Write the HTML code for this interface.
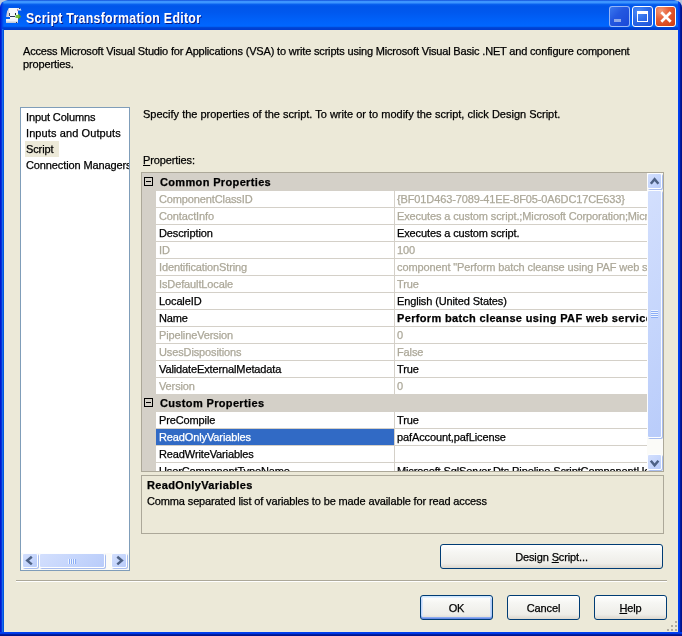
<!DOCTYPE html><html><head><meta charset="utf-8"><style>
*{box-sizing:border-box}
html,body{margin:0;padding:0}
body{-webkit-text-stroke:0.25px currentColor;letter-spacing:-0.12px;width:682px;height:636px;overflow:hidden;position:relative;background:#B9C6DE;font-family:"Liberation Sans",sans-serif;font-size:11px;color:#000}
#win{will-change:transform;position:absolute;left:0;top:0;width:682px;height:636px;background:#ECE9D8;border-radius:8px 8px 0 0;overflow:hidden}
.a{position:absolute}
.t{position:absolute;white-space:nowrap;line-height:13px}
.g{color:#ACA899}
.b{font-weight:bold;letter-spacing:0.35px}
.sb{position:absolute;border:1px solid #FDFEFF;border-radius:2px;background:linear-gradient(135deg,#D3DFFD 0%,#C6D6FC 50%,#B9CCFA 100%);box-shadow:1px 1px 0 #A9BDEF}
.btn{position:absolute;border:1px solid #003C74;border-radius:3px;background:linear-gradient(180deg,#FFFFFF 0%,#F6F6F3 30%,#EEEDE8 80%,#DCD7CE 100%);text-align:center}
.btn span{position:absolute;left:0;right:0;white-space:nowrap}
</style></head><body><div id="win">
<div class="a" style="left:0;top:0;width:682px;height:30px;border-radius:7px 7px 0 0;background:linear-gradient(180deg,#0033CC 0px,#3D95FF 1px,#3D95FF 3px,#0A63F0 4px,#0055EA 6px,#0058EE 12px,#0062FA 21px,#0066FF 25.5px,#0060F6 26.5px,#0048D8 27.5px,#003DD0 29px,#003DD0 30px)"></div>
<svg class="a" style="left:4px;top:6px" width="20" height="20" viewBox="0 0 20 20">
<path d="M5 2 H14 V13 H6 V11 H2.5 L3 6 Z" fill="#F6F7FB"/>
<path d="M2.5 11 L3 6 L5 2 L5 11 Z" fill="#D8D4DC"/>
<rect x="5" y="7" width="1" height="3" fill="#4A5068"/>
<rect x="6" y="10" width="5" height="1" fill="#2C3450"/>
<rect x="11" y="7" width="1" height="2" fill="#202838"/>
<path d="M13 2 H16 L17.5 4.5 H13 Z" fill="#E4ECF4"/>
<rect x="15" y="2" width="1" height="1" fill="#404860"/>
<rect x="13" y="3.5" width="1" height="1" fill="#C02850"/>
<path d="M11.5 9 H14 V7.5 L17 10.5 L14 13.5 V12 H11.5 Z" fill="#7CC23C"/>
<path d="M14 7.5 L17 10.5 L14 13.5 V12 L15.5 10.5 Z" fill="#4C9A28"/>
<rect x="2" y="13" width="12" height="4" fill="#EEF2F8"/>
<rect x="2" y="15.5" width="12" height="1.5" fill="#C4CCDC"/>
<rect x="12" y="16" width="1" height="1" fill="#303850"/>
</svg>
<div class="a" style="left:26px;top:10.5px;font-weight:bold;font-size:14px;color:#fff;text-shadow:1px 1px 0 #0A1883;-webkit-text-stroke:0;letter-spacing:0.3px;white-space:nowrap;line-height:14px;transform:scaleX(0.884);transform-origin:0 0">Script Transformation Editor</div>
<div class="a" style="left:609px;top:6px;width:21px;height:21px;border-radius:3px;border:1px solid rgba(190,215,255,0.75);background:linear-gradient(135deg,#3A78EE 0%,#2458E0 40%,#1A48D8 100%)"><div class="a" style="left:4px;top:12px;width:7px;height:3px;background:#8FA8E8"></div></div>
<div class="a" style="left:632px;top:6px;width:21px;height:21px;border-radius:3px;border:1px solid #fff;background:radial-gradient(circle at 30% 25%,#4A8CF8 0%,#2E6BE8 45%,#1C50D8 100%)"><div class="a" style="left:4px;top:4px;width:11px;height:11px;border:1px solid #fff;border-top-width:3px"></div></div>
<div class="a" style="left:655px;top:6px;width:21px;height:21px;border-radius:3px;border:1px solid #fff;background:radial-gradient(circle at 25% 20%,#F39A78 0%,#E65E36 40%,#D9481C 75%,#C93A10 100%)"><svg class="a" style="left:4px;top:4px" width="12" height="12" viewBox="0 0 12 12"><path d="M1.3 1.3 L10.7 10.7 M10.7 1.3 L1.3 10.7" stroke="#fff" stroke-width="2.7"/></svg></div>
<div class="a" style="left:0;top:29px;width:4px;height:607px;background:linear-gradient(90deg,#0019CF 0,#0019CF 1px,#0831D9 1px,#0831D9 2px,#166AEE 2px,#166AEE 3px,#0055DD 3px)"></div>
<div class="a" style="left:0;top:0;width:4px;height:29px;border-radius:7px 0 0 0;background:linear-gradient(90deg,#0019CF 0,#0028D8 1px,#0040E8 2px,rgba(0,80,238,0) 4px)"></div>
<div class="a" style="left:678px;top:0;width:4px;height:636px;background:linear-gradient(90deg,#0040F0 0,#0040F0 1px,#0038E6 1px,#0038E6 2px,#001EA0 2px,#001EA0 3px,#00138C 3px)"></div>
<div class="a" style="left:0;top:632px;width:682px;height:4px;background:linear-gradient(180deg,#0040F0 0,#0040F0 1px,#0038E6 1px,#0038E6 2px,#001EA0 2px,#001EA0 3px,#00138C 3px)"></div>
<div class="t" style="left:23px;top:45px;letter-spacing:-0.172px">Access Microsoft Visual Studio for Applications (VSA) to write scripts using Microsoft Visual Basic .NET and configure component</div>
<div class="t" style="left:23px;top:58px">properties.</div>
<div class="a" style="left:20px;top:107px;width:110px;height:464px;border:1px solid #7F9DB9;background:#fff;overflow:hidden">
<div class="a" style="left:4px;top:33px;width:34px;height:16px;background:#ECE9D8"></div>
<div class="a" style="left:5px;top:1px;height:16px;line-height:16px;white-space:nowrap;">Input Columns</div>
<div class="a" style="left:5px;top:17px;height:16px;line-height:16px;white-space:nowrap;letter-spacing:0.1px">Inputs and Outputs</div>
<div class="a" style="left:5px;top:33px;height:16px;line-height:16px;white-space:nowrap;">Script</div>
<div class="a" style="left:5px;top:49px;height:16px;line-height:16px;white-space:nowrap;">Connection Managers</div>
</div>
<div class="a" style="left:21px;top:553px;width:108px;height:17px;background:#FBFBF8"></div>
<div class="sb" style="left:22px;top:553px;width:16px;height:15px"></div>
<div class="sb" style="left:39px;top:553px;width:66px;height:15px"></div>
<div class="sb" style="left:111px;top:553px;width:16px;height:15px"></div>
<div class="t" style="left:143px;top:108px;letter-spacing:0">Specify the properties of the script. To write or to modify the script, click Design Script.</div>
<div class="t" style="left:143px;top:154px"><u>P</u>roperties:</div>
<div class="a" style="left:141px;top:172px;width:523px;height:300px;border:1px solid #ACA899;background:#D4D0C8;overflow:hidden"></div>
<div class="a" style="left:142px;top:173px;width:521px;height:298px;overflow:hidden">
<div class="a" style="left:2px;top:4px;width:9px;height:9px;border:1px solid #000"><div class="a" style="left:1px;top:3px;width:5px;height:1px;background:#000"></div></div>
<div class="a b" style="left:18px;top:1px;line-height:16px;white-space:nowrap">Common Properties</div>
<div class="a" style="left:14px;top:18px;width:238px;height:16px;background:#fff"></div>
<div class="a g" style="left:17px;top:18px;line-height:16px;white-space:nowrap;">ComponentClassID</div>
<div class="a g" style="left:253px;top:18px;width:252px;height:16px;background:#fff;overflow:hidden;line-height:16px;white-space:nowrap;padding-left:2px">{BF01D463-7089-41EE-8F05-0A6DC17CE633}</div>
<div class="a" style="left:14px;top:35px;width:238px;height:16px;background:#fff"></div>
<div class="a g" style="left:17px;top:35px;line-height:16px;white-space:nowrap;">ContactInfo</div>
<div class="a g" style="left:253px;top:35px;width:252px;height:16px;background:#fff;overflow:hidden;line-height:16px;white-space:nowrap;padding-left:2px">Executes a custom script.;Microsoft Corporation;Microsoft SqlServer v9; (C) 2005 Microsoft Corporation</div>
<div class="a" style="left:14px;top:52px;width:238px;height:16px;background:#fff"></div>
<div class="a " style="left:17px;top:52px;line-height:16px;white-space:nowrap;">Description</div>
<div class="a " style="left:253px;top:52px;width:252px;height:16px;background:#fff;overflow:hidden;line-height:16px;white-space:nowrap;padding-left:2px">Executes a custom script.</div>
<div class="a" style="left:14px;top:69px;width:238px;height:16px;background:#fff"></div>
<div class="a g" style="left:17px;top:69px;line-height:16px;white-space:nowrap;">ID</div>
<div class="a g" style="left:253px;top:69px;width:252px;height:16px;background:#fff;overflow:hidden;line-height:16px;white-space:nowrap;padding-left:2px">100</div>
<div class="a" style="left:14px;top:86px;width:238px;height:16px;background:#fff"></div>
<div class="a g" style="left:17px;top:86px;line-height:16px;white-space:nowrap;">IdentificationString</div>
<div class="a g" style="left:253px;top:86px;width:252px;height:16px;background:#fff;overflow:hidden;line-height:16px;white-space:nowrap;padding-left:2px">component &quot;Perform batch cleanse using PAF web service&quot;</div>
<div class="a" style="left:14px;top:103px;width:238px;height:16px;background:#fff"></div>
<div class="a g" style="left:17px;top:103px;line-height:16px;white-space:nowrap;">IsDefaultLocale</div>
<div class="a g" style="left:253px;top:103px;width:252px;height:16px;background:#fff;overflow:hidden;line-height:16px;white-space:nowrap;padding-left:2px">True</div>
<div class="a" style="left:14px;top:120px;width:238px;height:16px;background:#fff"></div>
<div class="a " style="left:17px;top:120px;line-height:16px;white-space:nowrap;">LocaleID</div>
<div class="a " style="left:253px;top:120px;width:252px;height:16px;background:#fff;overflow:hidden;line-height:16px;white-space:nowrap;padding-left:2px">English (United States)</div>
<div class="a" style="left:14px;top:137px;width:238px;height:16px;background:#fff"></div>
<div class="a " style="left:17px;top:137px;line-height:16px;white-space:nowrap;">Name</div>
<div class="a b" style="left:253px;top:137px;width:252px;height:16px;background:#fff;overflow:hidden;line-height:16px;white-space:nowrap;padding-left:2px">Perform batch cleanse using PAF web service</div>
<div class="a" style="left:14px;top:154px;width:238px;height:16px;background:#fff"></div>
<div class="a g" style="left:17px;top:154px;line-height:16px;white-space:nowrap;">PipelineVersion</div>
<div class="a g" style="left:253px;top:154px;width:252px;height:16px;background:#fff;overflow:hidden;line-height:16px;white-space:nowrap;padding-left:2px">0</div>
<div class="a" style="left:14px;top:171px;width:238px;height:16px;background:#fff"></div>
<div class="a g" style="left:17px;top:171px;line-height:16px;white-space:nowrap;">UsesDispositions</div>
<div class="a g" style="left:253px;top:171px;width:252px;height:16px;background:#fff;overflow:hidden;line-height:16px;white-space:nowrap;padding-left:2px">False</div>
<div class="a" style="left:14px;top:188px;width:238px;height:16px;background:#fff"></div>
<div class="a " style="left:17px;top:188px;line-height:16px;white-space:nowrap;">ValidateExternalMetadata</div>
<div class="a " style="left:253px;top:188px;width:252px;height:16px;background:#fff;overflow:hidden;line-height:16px;white-space:nowrap;padding-left:2px">True</div>
<div class="a" style="left:14px;top:205px;width:238px;height:16px;background:#fff"></div>
<div class="a g" style="left:17px;top:205px;line-height:16px;white-space:nowrap;">Version</div>
<div class="a g" style="left:253px;top:205px;width:252px;height:16px;background:#fff;overflow:hidden;line-height:16px;white-space:nowrap;padding-left:2px">0</div>
<div class="a" style="left:2px;top:225px;width:9px;height:9px;border:1px solid #000"><div class="a" style="left:1px;top:3px;width:5px;height:1px;background:#000"></div></div>
<div class="a b" style="left:18px;top:222px;line-height:16px;white-space:nowrap">Custom Properties</div>
<div class="a" style="left:14px;top:239px;width:238px;height:16px;background:#fff"></div>
<div class="a " style="left:17px;top:239px;line-height:16px;white-space:nowrap;">PreCompile</div>
<div class="a " style="left:253px;top:239px;width:252px;height:16px;background:#fff;overflow:hidden;line-height:16px;white-space:nowrap;padding-left:2px">True</div>
<div class="a" style="left:14px;top:256px;width:238px;height:16px;background:#316AC5"></div>
<div class="a " style="left:17px;top:256px;line-height:16px;white-space:nowrap;color:#fff;">ReadOnlyVariables</div>
<div class="a " style="left:253px;top:256px;width:252px;height:16px;background:#fff;overflow:hidden;line-height:16px;white-space:nowrap;padding-left:2px">pafAccount,pafLicense</div>
<div class="a" style="left:14px;top:273px;width:238px;height:16px;background:#fff"></div>
<div class="a " style="left:17px;top:273px;line-height:16px;white-space:nowrap;">ReadWriteVariables</div>
<div class="a " style="left:253px;top:273px;width:252px;height:16px;background:#fff;overflow:hidden;line-height:16px;white-space:nowrap;padding-left:2px"></div>
<div class="a" style="left:14px;top:290px;width:238px;height:16px;background:#fff"></div>
<div class="a " style="left:17px;top:290px;line-height:16px;white-space:nowrap;">UserComponentTypeName</div>
<div class="a " style="left:253px;top:290px;width:252px;height:16px;background:#fff;overflow:hidden;line-height:16px;white-space:nowrap;padding-left:2px">Microsoft.SqlServer.Dts.Pipeline.ScriptComponentHost</div>
<div class="a" style="left:505px;top:0;width:16px;height:298px;background:#FBFBF8"></div>
<div class="sb" style="left:505px;top:0;width:15px;height:16px"></div>
<div class="sb" style="left:505px;top:17px;width:15px;height:248px"></div>
<div class="sb" style="left:505px;top:281px;width:15px;height:16px"></div>
</div>
<svg class="a" style="left:0;top:0" width="682" height="636" viewBox="0 0 682 636"><polyline points="31.8,556.8 27.3,560.5999999999999 31.8,564.4" fill="none" stroke="#4D6185" stroke-width="2.5"/><polyline points="117.3,556.8 121.8,560.5999999999999 117.3,564.4" fill="none" stroke="#4D6185" stroke-width="2.5"/><rect x="68" y="559" width="1" height="5" fill="#EEF4FE"/><rect x="69" y="559" width="1" height="5" fill="#8CAEF6"/><rect x="70" y="559" width="1" height="5" fill="#EEF4FE"/><rect x="71" y="559" width="1" height="5" fill="#8CAEF6"/><rect x="72" y="559" width="1" height="5" fill="#EEF4FE"/><rect x="73" y="559" width="1" height="5" fill="#8CAEF6"/><rect x="74" y="559" width="1" height="5" fill="#EEF4FE"/><rect x="75" y="559" width="1" height="5" fill="#8CAEF6"/></svg>
<svg class="a" style="left:0;top:0" width="682" height="636" viewBox="0 0 682 636"><polyline points="650.8,183.8 654.5999999999999,179.3 658.4,183.8" fill="none" stroke="#4D6185" stroke-width="2.5"/><polyline points="650.8,460.8 654.5999999999999,465.3 658.4,460.8" fill="none" stroke="#4D6185" stroke-width="2.5"/><rect x="651" y="310" width="7" height="1" fill="#EEF4FE"/><rect x="651" y="311" width="7" height="1" fill="#8CAEF6"/><rect x="651" y="312" width="7" height="1" fill="#EEF4FE"/><rect x="651" y="313" width="7" height="1" fill="#8CAEF6"/><rect x="651" y="314" width="7" height="1" fill="#EEF4FE"/><rect x="651" y="315" width="7" height="1" fill="#8CAEF6"/><rect x="651" y="316" width="7" height="1" fill="#EEF4FE"/><rect x="651" y="317" width="7" height="1" fill="#8CAEF6"/></svg>
<div class="a" style="left:141px;top:475px;width:523px;height:59px;border:1px solid #ACA899"></div>
<div class="t b" style="left:147px;top:479px">ReadOnlyVariables</div>
<div class="t" style="left:147px;top:495px;letter-spacing:-0.133px">Comma separated list of variables to be made available for read access</div>
<div class="btn" style="left:440px;top:544px;width:223px;height:25px"><span style="top:6px">Design <u>S</u>cript...</span></div>
<div class="a" style="left:16px;top:580px;width:651px;height:1px;background:#ACA899"></div>
<div class="a" style="left:16px;top:581px;width:651px;height:1px;background:#fff"></div>
<div class="btn" style="left:420px;top:595px;width:73px;height:25px;box-shadow:inset 0 -1px 0 #6A8CE4,inset 0 -2px 0 #8AAAF0,inset 0 1px 0 #CEE7FF,inset 0 2px 0 #E4F0FF,inset 1px 0 0 #C0D6FA,inset -1px 0 0 #B0CCF8,inset 2px 0 0 #D8E6FC,inset -2px 0 0 #C8DAFA"><span style="top:6px">OK</span></div>
<div class="btn" style="left:507px;top:595px;width:73px;height:25px"><span style="top:6px">Cancel</span></div>
<div class="btn" style="left:594px;top:595px;width:73px;height:25px"><span style="top:6px"><u>H</u>elp</span></div>
<div class="a" style="left:675px;top:621px;width:2px;height:2px;background:#B0ACA0"></div>
<div class="a" style="left:671px;top:625px;width:2px;height:2px;background:#B0ACA0"></div>
<div class="a" style="left:675px;top:625px;width:2px;height:2px;background:#B0ACA0"></div>
<div class="a" style="left:667px;top:629px;width:2px;height:2px;background:#B0ACA0"></div>
<div class="a" style="left:671px;top:629px;width:2px;height:2px;background:#B0ACA0"></div>
<div class="a" style="left:675px;top:629px;width:2px;height:2px;background:#B0ACA0"></div>
</div></body></html>
